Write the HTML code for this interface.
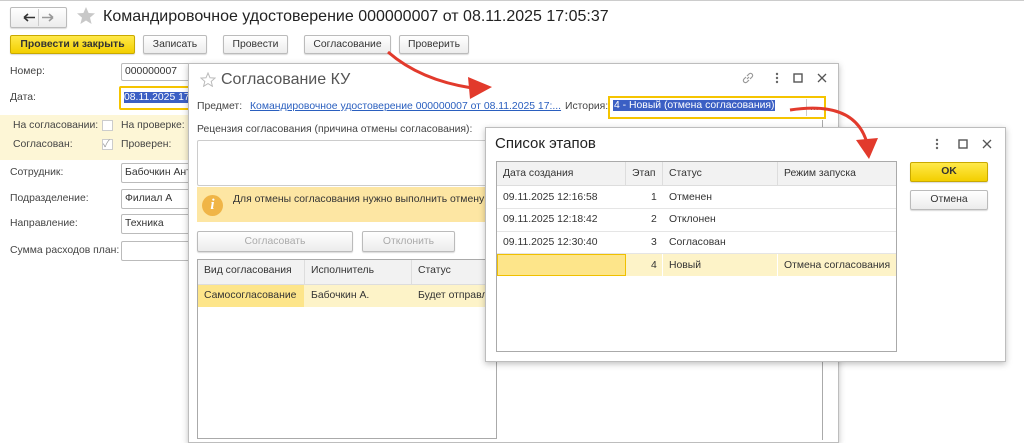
<!DOCTYPE html>
<html><head><meta charset="utf-8"><style>
*{box-sizing:border-box;margin:0;padding:0}
body{width:1024px;height:431px;overflow:hidden;background:#fff;font-family:"Liberation Sans","Noto Sans CJK SC",sans-serif;font-size:10.4px;color:#444;position:relative}
.a{position:absolute;white-space:nowrap}
.btn{position:absolute;border:1px solid #bbb;border-radius:2px;background:linear-gradient(#fff,#ececec);text-align:center;color:#333;box-shadow:0 1px 1px rgba(0,0,0,.15)}
.inp{position:absolute;border:1px solid #bbb;border-radius:2px;background:#fff;color:#333;padding-left:3px;overflow:hidden}
.dlg{position:absolute;background:#fff;border:1px solid #bdbdbd;box-shadow:0 2px 6px rgba(0,0,0,.25)}
.cell{position:absolute;padding-left:6px;color:#333;white-space:nowrap}
</style></head><body>
<div class="a" style="left:0;top:0;width:1024px;height:1px;background:#ccc"></div>
<div class="btn" style="left:10px;top:7px;width:57px;height:21px;"></div>
<div class="a" style="left:38px;top:9px;width:1px;height:17px;background:#ccc"></div>
<svg class="a" style="left:10px;top:7px" width="57" height="21">
<path d="M14 10.5 H25 M14 10.5 L18 7 M14 10.5 L18 14" stroke="#333" stroke-width="1.6" fill="none"/>
<path d="M43 10.5 H32 M43 10.5 L39 7 M43 10.5 L39 14" stroke="#999" stroke-width="1.6" fill="none"/>
</svg>
<svg class="a" style="left:76px;top:6px" width="20" height="19"><path d="M10 1 L12.6 7 L19 7.4 L14 11.6 L15.6 18 L10 14.5 L4.4 18 L6 11.6 L1 7.4 L7.4 7 Z" fill="#c8c8c8"/></svg>
<div class="a" style="left:103px;top:8px;font-size:16px;color:#222">Командировочное удостоверение 000000007 от 08.11.2025 17:05:37</div>
<div class="btn" style="left:10px;top:35px;width:125px;height:19px;line-height:17px;background:linear-gradient(#ffe94a,#f3cf00);border-color:#c9a900;font-weight:bold;color:#333">Провести и закрыть</div>
<div class="btn" style="left:143px;top:35px;width:64px;height:19px;line-height:17px">Записать</div>
<div class="btn" style="left:223px;top:35px;width:65px;height:19px;line-height:17px">Провести</div>
<div class="btn" style="left:304px;top:35px;width:87px;height:19px;line-height:17px">Согласование</div>
<div class="btn" style="left:399px;top:35px;width:70px;height:19px;line-height:17px">Проверить</div>
<div class="a" style="left:10px;top:66px">Номер:</div>
<div class="inp" style="left:121px;top:63px;width:80px;height:18px;line-height:16px">000000007</div>
<div class="a" style="left:10px;top:92px">Дата:</div>
<div class="inp" style="left:119px;top:86px;width:80px;height:24px;border:2px solid #f5c400;padding-top:4px"><span style="background:#3b5fc4;color:#fff">08.11.2025 17</span></div>
<div class="a" style="left:0;top:115px;width:190px;height:45px;background:#fdf6d6"></div>
<div class="a" style="left:13px;top:120px">На согласовании:</div>
<div class="a" style="left:102px;top:120px;width:11px;height:11px;border:1px solid #ccc;background:#fff"></div>
<div class="a" style="left:121px;top:120px">На проверке:</div>
<div class="a" style="left:13px;top:139px">Согласован:</div>
<div class="a" style="left:102px;top:139px;width:11px;height:11px;border:1px solid #ccc;background:#fff;font-size:10px;line-height:9px;color:#999">✓</div>
<div class="a" style="left:121px;top:139px">Проверен:</div>
<div class="a" style="left:10px;top:167px">Сотрудник:</div>
<div class="inp" style="left:121px;top:163px;width:80px;height:20px;line-height:18px">Бабочкин Ант</div>
<div class="a" style="left:10px;top:193px">Подразделение:</div>
<div class="inp" style="left:121px;top:189px;width:80px;height:20px;line-height:18px">Филиал А</div>
<div class="a" style="left:10px;top:218px">Направление:</div>
<div class="inp" style="left:121px;top:214px;width:80px;height:20px;line-height:18px">Техника</div>
<div class="a" style="left:10px;top:245px">Сумма расходов план:</div>
<div class="inp" style="left:121px;top:241px;width:80px;height:20px"></div>

<!-- dialog 1 -->
<div class="dlg" style="left:188px;top:63px;width:651px;height:380px"></div>
<div class="a" style="left:822px;top:120px;width:1px;height:320px;background:#aaa"></div>
<svg class="a" style="left:200px;top:72px" width="16" height="15"><path d="M8 1 L10 5.8 L15 6.1 L11.2 9.4 L12.4 14.3 L8 11.6 L3.6 14.3 L4.8 9.4 L1 6.1 L6 5.8 Z" fill="none" stroke="#bbb" stroke-width="1"/></svg>
<div class="a" style="left:221px;top:71px;font-size:16px;color:#555">Согласование КУ</div>
<svg class="a" style="left:741px;top:71px" width="14" height="14"><path d="M6 8 L8 6 M5 6 L3 8 A2 2 0 0 0 6 11 L8 9 M9 8 L11 6 A2 2 0 0 0 8 3 L6 5" stroke="#999" stroke-width="1.2" fill="none"/></svg>
<svg class="a" style="left:775px;top:72px" width="40" height="12"><circle cx="2" cy="2" r="1.2" fill="#666"/><circle cx="2" cy="6" r="1.2" fill="#666"/><circle cx="2" cy="10" r="1.2" fill="#666"/><rect x="19" y="2" width="8" height="8" fill="none" stroke="#555" stroke-width="1.4"/></svg>
<svg class="a" style="left:817px;top:73px" width="10" height="10"><path d="M1 1 L9 9 M9 1 L1 9" stroke="#555" stroke-width="1.3"/></svg>
<div class="a" style="left:197px;top:101px;color:#444">Предмет:</div>
<div class="a" style="left:250px;top:101px;color:#2a5fbf;text-decoration:underline">Командировочное удостоверение 000000007 от 08.11.2025 17:...</div>
<div class="a" style="left:565px;top:101px">История:</div>
<div class="a" style="left:608px;top:96px;width:218px;height:23px;border:2px solid #f5c400;background:#fff"></div>
<div class="a" style="left:613px;top:100px;background:#3b5fc4;color:#fff;padding:0 1px">4 - Новый (отмена согласования)</div>
<div class="a" style="left:806px;top:99px;width:1px;height:17px;background:#ccc"></div>
<div class="a" style="left:810px;top:102px;color:#666">...</div>
<div class="a" style="left:197px;top:124px">Рецензия согласования (причина отмены согласования):</div>
<div class="a" style="left:197px;top:140px;width:300px;height:46px;border:1px solid #ccc;border-radius:2px"></div>
<div class="a" style="left:197px;top:187px;width:300px;height:35px;background:#fde6a3"></div>
<div class="a" style="left:202px;top:195px;width:21px;height:21px;border-radius:50%;background:#f0b547;color:#fff;font-weight:bold;font-style:italic;font-size:15px;text-align:center;line-height:21px;font-family:'Liberation Serif',serif">i</div>
<div class="a" style="left:233px;top:194px;color:#333">Для отмены согласования нужно выполнить отмену п</div>
<div class="btn" style="left:197px;top:231px;width:156px;height:21px;line-height:19px;color:#aaa">Согласовать</div>
<div class="btn" style="left:362px;top:231px;width:93px;height:21px;line-height:19px;color:#aaa">Отклонить</div>
<div class="a" style="left:197px;top:259px;width:300px;height:180px;border:1px solid #aaa"></div>
<div class="a" style="left:198px;top:260px;width:299px;height:25px;background:#f2f2f2;border-bottom:1px solid #ddd"></div>
<div class="cell" style="left:198px;top:265px">Вид согласования</div>
<div class="a" style="left:304px;top:260px;width:1px;height:25px;background:#ddd"></div>
<div class="cell" style="left:305px;top:265px">Исполнитель</div>
<div class="a" style="left:411px;top:260px;width:1px;height:25px;background:#ddd"></div>
<div class="cell" style="left:412px;top:265px">Статус</div>
<div class="a" style="left:198px;top:285px;width:106px;height:22px;background:#fde58a"></div>
<div class="a" style="left:304px;top:285px;width:193px;height:22px;background:#fdf3c8"></div>
<div class="cell" style="left:198px;top:290px">Самосогласование</div>
<div class="cell" style="left:305px;top:290px">Бабочкин А.</div>
<div class="cell" style="left:412px;top:290px">Будет отправл</div>

<!-- dialog 2 -->
<div class="dlg" style="left:485px;top:127px;width:521px;height:235px"></div>
<div class="a" style="left:495px;top:135px;font-size:15px;color:#222">Список этапов</div>
<svg class="a" style="left:935px;top:138px" width="40" height="12"><circle cx="2" cy="2" r="1.2" fill="#666"/><circle cx="2" cy="6" r="1.2" fill="#666"/><circle cx="2" cy="10" r="1.2" fill="#666"/><rect x="24" y="2" width="8" height="8" fill="none" stroke="#555" stroke-width="1.4"/></svg>
<svg class="a" style="left:982px;top:139px" width="10" height="10"><path d="M1 1 L9 9 M9 1 L1 9" stroke="#555" stroke-width="1.3"/></svg>
<div class="a" style="left:496px;top:161px;width:401px;height:191px;border:1px solid #aaa"></div>
<div class="a" style="left:497px;top:162px;width:399px;height:24px;background:#f2f2f2;border-bottom:1px solid #ddd"></div>
<div class="a" style="left:625px;top:162px;width:1px;height:24px;background:#ddd"></div>
<div class="a" style="left:662px;top:162px;width:1px;height:24px;background:#ddd"></div>
<div class="a" style="left:777px;top:162px;width:1px;height:24px;background:#ddd"></div>
<div class="cell" style="left:497px;top:168px">Дата создания</div>
<div class="cell" style="left:626px;top:168px">Этап</div>
<div class="cell" style="left:663px;top:168px">Статус</div>
<div class="cell" style="left:778px;top:168px">Режим запуска</div>
<div class="a" style="left:497px;top:208px;width:399px;height:1px;background:#e5e5e5"></div>
<div class="a" style="left:497px;top:231px;width:399px;height:1px;background:#e5e5e5"></div>
<div class="a" style="left:497px;top:253px;width:399px;height:1px;background:#e5e5e5"></div>
<div class="cell" style="left:497px;top:192px">09.11.2025 12:16:58</div><div class="a" style="left:651px;top:192px;color:#333">1</div><div class="cell" style="left:663px;top:192px">Отменен</div>
<div class="cell" style="left:497px;top:214px">09.11.2025 12:18:42</div><div class="a" style="left:651px;top:214px;color:#333">2</div><div class="cell" style="left:663px;top:214px">Отклонен</div>
<div class="cell" style="left:497px;top:237px">09.11.2025 12:30:40</div><div class="a" style="left:651px;top:237px;color:#333">3</div><div class="cell" style="left:663px;top:237px">Согласован</div>
<div class="a" style="left:497px;top:254px;width:399px;height:22px;background:#fdf3c8"></div>
<div class="a" style="left:497px;top:254px;width:129px;height:22px;background:#fde58a;border:1.5px solid #f0c000"></div>
<div class="a" style="left:662px;top:254px;width:1px;height:22px;background:#fff"></div>
<div class="a" style="left:777px;top:254px;width:1px;height:22px;background:#fff"></div>
<div class="a" style="left:651px;top:260px;color:#333">4</div><div class="cell" style="left:663px;top:260px">Новый</div><div class="cell" style="left:778px;top:260px">Отмена согласования</div>
<div class="btn" style="left:910px;top:162px;width:78px;height:20px;line-height:18px;background:linear-gradient(#ffe94a,#f3cf00);border-color:#c9a900;font-weight:bold">OK</div>
<div class="btn" style="left:910px;top:190px;width:78px;height:20px;line-height:18px">Отмена</div>

<svg class="a" style="left:0;top:0" width="1024" height="431">
<path d="M388 52 Q420 80 472 88" stroke="#e23a2c" stroke-width="3" fill="none"/>
<path d="M468 77 L492 87 L470 99 Z" fill="#e23a2c"/>
<path d="M790 110 Q855 100 867 143" stroke="#e23a2c" stroke-width="3" fill="none"/>
<path d="M856 140 L869 159 L878 138 Z" fill="#e23a2c"/>
</svg>
</body></html>
